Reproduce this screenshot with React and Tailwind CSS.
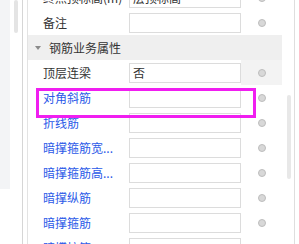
import React from 'react'

const rows = [
  { label: '终点顶标高(m)', value: '层顶标高' },
  { label: '备注', value: '' },
  { header: '钢筋业务属性' },
  { label: '顶层连梁', value: '否', hover: true },
  { label: '对角斜筋', value: '', blue: true },
  { label: '折线筋', value: '', blue: true },
  { label: '暗撑箍筋宽...', value: '', blue: true },
  { label: '暗撑箍筋高...', value: '', blue: true },
  { label: '暗撑纵筋', value: '', blue: true },
  { label: '暗撑箍筋', value: '', blue: true },
  { label: '暗撑拉筋', value: '', blue: true },
]

function Row({ row }) {
  if (row.header) {
    return (
      <div className="flex h-[25px] items-center bg-[#efefef]">
        <span className="ml-[7px] mr-[8px] h-0 w-0 border-x-[3px] border-t-[4px] border-x-transparent border-t-[#8a8a8a]" />
        <span className="text-[12px] text-[#333]">{row.header}</span>
      </div>
    )
  }
  return (
    <div className="flex h-[25px] items-center">
      <div
        className={`w-[101px] shrink-0 pl-[15px] text-[12px] whitespace-nowrap overflow-hidden ${
          row.blue ? 'text-[#2b5ae8]' : 'text-[#333]'
        }`}
      >
        {row.label}
      </div>
      <div className="flex h-[20px] w-[112px] shrink-0 items-center border border-[#dcdcdc] bg-white px-[3px] text-[12px] text-[#333] whitespace-nowrap overflow-hidden">
        {row.value}
      </div>
      <div
        className={`flex h-full flex-1 items-center justify-center ${
          row.hover ? 'bg-[#f3f3f3]' : ''
        }`}
      >
        <span className="h-[8px] w-[8px] rounded-full border border-[#bdbdbd] bg-[#d8d8d8]" />
      </div>
    </div>
  )
}

export default function App() {
  return (
    <div
      className="relative flex h-[244px] w-[299px] overflow-hidden bg-white"
      style={{ fontFamily: '"Noto Sans CJK SC", "Noto Sans", sans-serif' }}
    >
      <div className="flex w-[23px] shrink-0 border-r border-[#d6d6d6]">
        <div className="h-[189px] w-[10px] bg-[#f3f4f6]" />
        <div className="ml-[4px] h-[33px] w-[4px] rounded-full bg-[#e4e4e4]" />
      </div>
      <div className="ml-[4px] flex w-[255px] shrink-0 flex-col border-l border-[#e3e3e3] pt-0">
        <div className="-mt-[15px] flex flex-col">
          {rows.map((row, i) => (
            <Row key={i} row={row} />
          ))}
        </div>
      </div>
      <div className="flex w-[13px] shrink-0 border-r border-[#dedede]">
        <div className="ml-[5px] mt-[95px] h-[84px] w-[4px] rounded-full bg-[#e8e8e8]" />
      </div>

      <div className="absolute left-[36px] top-[88px] h-[30px] w-[220px] border-[3px] border-[#f01ef0]" />
    </div>
  )
}
